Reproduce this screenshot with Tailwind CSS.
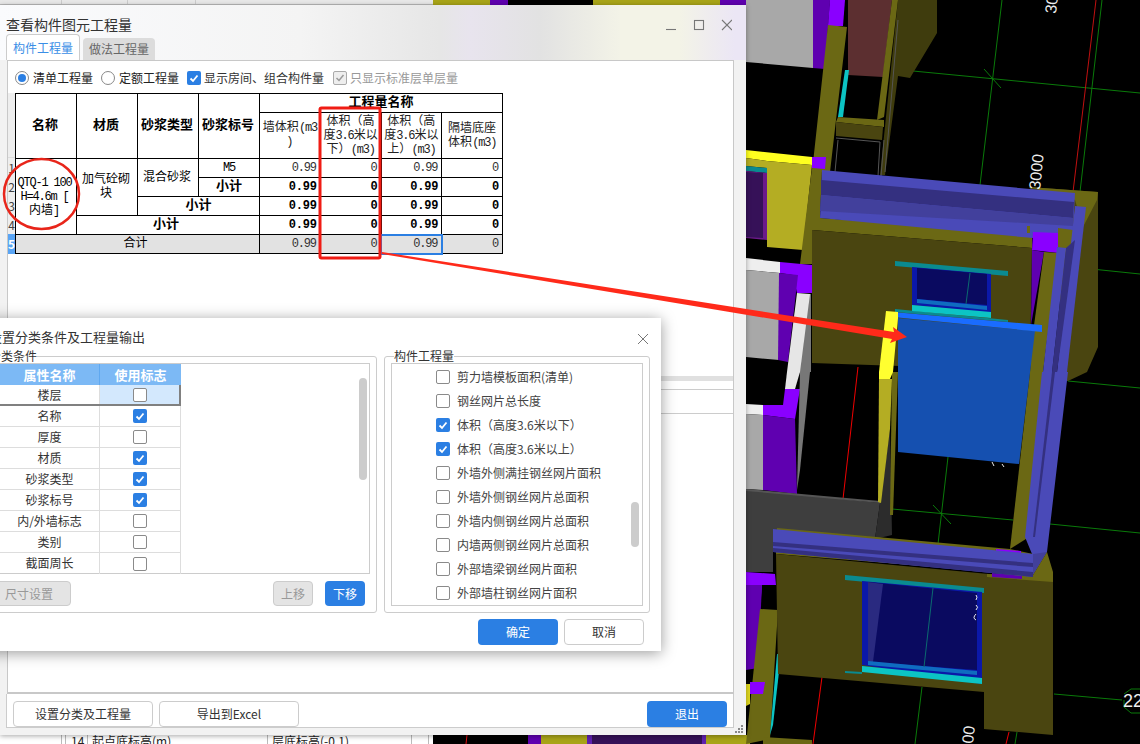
<!DOCTYPE html>
<html lang="zh">
<head>
  <meta charset="UTF-8" />
  <title>查看构件图元工程量</title>
  <script src="https://cdn.jsdelivr.net/npm/@tailwindcss/browser@4"></script>
</head>
<body class="bg-black">
<div class="relative w-[1140px] h-[744px] overflow-hidden bg-black font-['Noto_Sans_CJK_SC','Noto_Sans',sans-serif] text-[12px] text-[#333]">

  <!-- 3D view behind the windows -->
  <svg class="absolute left-0 top-0" width="1140" height="744" viewBox="0 0 1140 744">
    <rect width="1140" height="744" fill="#000"/>
    <!-- strips showing above and below the window -->
    <rect x="433" y="0" width="57" height="6" fill="#a8a418"/>
    <rect x="490" y="0" width="18" height="6" fill="#5f00b0"/>
    <rect x="593" y="0" width="127" height="6" fill="#a8a418"/>
    <rect x="720" y="0" width="30" height="6" fill="#5f00b0"/>
    <rect x="528" y="735" width="13" height="9" fill="#5f00b0"/>
    <rect x="541" y="735" width="46" height="9" fill="#a8a418"/>
    <rect x="587" y="735" width="5" height="9" fill="#5f20b0"/>
    <rect x="592" y="735" width="110" height="9" fill="#361158"/>
    <rect x="702" y="735" width="4" height="9" fill="#5f20b0"/>
    <rect x="706" y="735" width="44" height="9" fill="#a8a418"/>
    <line x1="467" y1="735" x2="466" y2="744" stroke="#e01010"/>

    <!-- grid lines -->
    <g stroke="#0a7a0a" stroke-width="1" fill="none">
      <path d="M913 71L1140 93M1002 0L980 185M1102 0L1080 192M984 69L1001 88M1082 268L1140 274"/>
      <path d="M892 509L1013 520M1050 524L1140 533M948 457L938 544M933 505L951 524M1068 381L1140 388"/>
      <path d="M922 687L915 744M1054 694L1122 700M1017 732L1015 744"/>
      <path d="M1124 694L1131 689L1140 689M1124 700L1124 707L1131 713L1140 713"/>
    </g>
    <g stroke="#c01010" stroke-width="1" fill="none">
      <path d="M1096 0L1073 192"/>
      <path stroke="#f00000" d="M858 367L843 499M822 677L813 744M1009 732L1006 744"/>
    </g>

    <!-- upper tower -->
    <polygon points="746,0 813,0 813,68 746,62" fill="#a8a8a8"/>
    <polygon points="813,0 830,0 825,69 813,68" fill="#5f00b0"/>
    <polygon points="830,0 845,0 843,26 828,26" fill="#8a00ff"/>
    <polygon points="848,0 892,0 883,77 848,75" fill="#5c2f30"/>
    <polygon points="898,0 937,0 937,33 910,78 898,76 885,175 880,175" fill="#3f3c0d"/>
    <polygon points="828,25 847,27 836,120 830,172 812,172" fill="#6b6814"/>
    <polygon points="892,0 898,0 884,117 877,120" fill="#6b6814"/>
    <polygon points="845,70 849,70 843,117 838,117" fill="#0cc4c4"/>
    <polygon points="838,117 884,120 884,127 836,122" fill="#6b6814"/>
    <polygon points="836,122 883,127 882,140 836,136" fill="#4a4510"/>
    <path d="M836 138L880 142L878 176M838 140L835 172M884 140L881 176" stroke="#555" fill="none"/>
    <path d="M898 20L885 172" stroke="#555" fill="none"/>

    <!-- left blocks -->
    <polygon points="746,150 812,157 812,165 767,161 746,158" fill="#ffff20"/>
    <polygon points="767,161 812,165 803,250 767,247" fill="#b4ad23"/>
    <polygon points="746,158 767,161 767,168 746,166" fill="#b4ad23"/>
    <polygon points="746,166 767,168 767,173 746,171" fill="#0a8a90"/>
    <polygon points="746,171 767,173 767,240 746,238" fill="#6b1a8a"/>
    <polygon points="746,172 763,173 763,238 746,237" fill="#361158"/>
    <polygon points="812,157 826,157 825,169 812,168" fill="#8a00ff"/>
    <polygon points="746,258 780,262 780,273 746,270" fill="#eeeeee"/>
    <polygon points="746,270 780,273 779,360 746,357" fill="#a8a8a8"/>
    <polygon points="780,262 812,265 812,293 797,293 793,275 780,273" fill="#8a00ff"/>
    <polygon points="779,273 798,275 788,362 778,360" fill="#5f00b0"/>
    <polygon points="808,294 811,294 811,372 800,372 785,389 795,389" fill="#777"/>
    <polygon points="797,293 810,294 800,372 795,389 785,389 787,372" fill="#e6e6e6"/>
    <polygon points="746,404 763,405 763,415 746,414" fill="#eeeeee"/>
    <polygon points="746,414 763,415 763,490 746,489" fill="#a8a8a8"/>
    <polygon points="763,405 783,405 785,389 800,389 795,419 763,415" fill="#8a00ff"/>
    <polygon points="763,415 795,419 797,494 763,490" fill="#5f00b0"/>
    <polygon points="800,372 810,372 800,470 797,490" fill="#777"/>

    <!-- dark wall -->
    <polygon points="746,489 880,503 875,539 773,532 773,572 746,572" fill="#3e3e3e"/>
    <polygon points="746,489 880,501 880,503 746,491" fill="#555"/>
    <polygon points="880,503 890,429 892,535 875,539" fill="#2c2c2c"/>

    <!-- bottom-left pieces -->
    <polygon points="746,572 775,574 776,585 762,585 760,609 746,610" fill="#8a00ff"/>
    <polygon points="746,585 762,585 758,668 746,670" fill="#5f00b0"/>
    <polygon points="760,609 778,610 770,739 746,744" fill="#6b6814"/>
    <polygon points="746,684 750,684 750,704 746,706" fill="#e0d820"/>
    <polygon points="750,682 765,682 763,694 750,694" fill="#8a00ff"/>
    <polygon points="777,654 781,654 773,725 770,735" fill="#0cc4c4"/>
    <polygon points="763,737 812,740 812,744 763,744" fill="#6b6814"/>

    <!-- upper building -->
    <polygon points="1029,187 1098,192 1098,347 1087,372 1068,381 1060,381 1060,230" fill="#4a4510"/>
    <polygon points="1029,187 1098,192 1097,200 1083,227 1075,200" fill="#6b6814"/>
    <polygon points="812,168 822,170 820,218 1032,233 1032,248 812,230 812,264 800,264" fill="#6b6814"/>
    <polygon points="812,230 1032,248 1030,372 1019,464 1019,370 812,363" fill="#4a4510"/>
    <polygon points="822,170 1075,193 1073,230 1033,238 820,218" fill="#4a4ab8"/>
    <polygon points="821,180 1074,202 1073,218 821,195" fill="#343080"/>
    <polygon points="821,195 1073,218 1073,226 820,211" fill="#42409c"/>
    <polygon points="1027,226 1030,226 1030,233 1027,233" fill="#6b6814"/>
    <polygon points="1058,228 1073,230 1073,250 1058,253" fill="#6b6814"/>
    <polygon points="1033,232 1058,233 1058,253 1032,250" fill="#8a00ff"/>
    <polygon points="1032,250 1044,252 1031,325" fill="#5f00b0"/>
    <polygon points="1044,252 1058,253 1043,372 1030,372 1032,340" fill="#6b6814"/>
    <polygon points="1030,372 1052,372 1037,532 1010,549" fill="#6b6814"/>

    <!-- posts on the right -->
    <polygon points="1075,206 1086,207 1067,372 1057,372" fill="#4a4ab8"/>
    <polygon points="1066,248 1075,240 1057,372 1052,372" fill="#343080"/>
    <polygon points="1057,247 1066,248 1052,372 1043,372" fill="#4a4ab8"/>
    <polygon points="1042,372 1068,372 1047,552 1033,575 1032,554 1025,537" fill="#4a4ab8"/>
    <polygon points="1052,372 1055,372 1035,537 1033,537" fill="#343080"/>
    <polygon points="1047,552 1033,575 1033,554" fill="#42409c"/>

    <!-- upper window -->
    <polygon points="895,261 1008,271 1008,276 895,266" fill="#0a8a90"/>
    <polygon points="912,267 991,274 991,313 912,305" fill="#0b18a8"/>
    <polygon points="917,268 987,274 987,305 917,299" fill="#0a0a60"/>
    <polygon points="917,299 987,306 987,310 917,303" fill="#0f6cc0"/>
    <line x1="970" y1="273" x2="966" y2="304" stroke="#0a6a70"/>
    <polygon points="895,309 1008,320 1008,322 895,312" fill="#0a8a90"/>
    <polygon points="912,305 991,312 991,318 912,311" fill="#0cc4c4"/>

    <!-- blue panel and yellow post -->
    <polygon points="898,318 1035,331 1019,464 898,452" fill="#1550b0"/>
    <polygon points="893,312 1042,325 1042,332 893,317" fill="#1a6cff"/>
    <polygon points="892,372 898,372 893,515 890,515" fill="#6b6814"/>
    <polygon points="886,311 898,312 898,318 893,372 890,379 879,379 879,372" fill="#ffff30"/>
    <polygon points="879,379 892,379 890,429 881,503 878,502" fill="#b4ad23"/>
    <path d="M992 462L994 466M1002 464L1004 467" stroke="#eee"/>

    <!-- lower building -->
    <polygon points="777,528 1010,549 1033,554 1033,575 776,554" fill="#6b6814"/>
    <polygon points="776,554 1053,580 1053,735 984,729 984,692 778,674" fill="#4a4510"/>
    <polygon points="1047,552 1053,572 1053,582 987,577 987,574 1033,575" fill="#6b6814"/>
    <polygon points="992,573 1022,576 1022,579 992,577" fill="#5f00b0"/>
    <polygon points="996,549 1021,551 1021,553 996,552" fill="#8a00ff"/>
    <polygon points="773,529 1033,554 1033,577 773,552" fill="#4a4ab8"/>
    <polygon points="773,542 1033,563 1033,567 773,546" fill="#343080"/>
    <polygon points="773,548 1033,572 1033,577 773,552" fill="#343080"/>
    <polygon points="845,575 984,588 984,593 845,580" fill="#0a8a90"/>
    <polygon points="862,581 982,592 982,684 862,665" fill="#0b18a8"/>
    <polygon points="868,582 977,593 977,670 868,662" fill="#0a0a60"/>
    <polygon points="868,582 883,584 873,662 868,662" fill="#2a2a80"/>
    <polygon points="868,661 977,671 977,675 868,665" fill="#0f6cc0"/>
    <polygon points="862,666 982,678 982,684 862,672" fill="#0cc4c4"/>
    <polygon points="845,671 862,672 862,674 845,673" fill="#0a8a90"/>
    <line x1="933" y1="588" x2="924" y2="667" stroke="#0a6a70"/>
    <path d="M976 595Q978 597 976 600M976 605Q979 607 976 610M976 614Q972 618 976 620" stroke="#eee" fill="none"/>

    <!-- dimension labels -->
    <text transform="translate(1056,14) rotate(-84)" fill="#eee" font-family="Liberation Sans" font-size="16">30</text>
    <text transform="translate(1040,190) rotate(-84)" fill="#eee" font-family="Liberation Sans" font-size="16">3000</text>
    <text transform="translate(973,744) rotate(-84)" fill="#eee" font-family="Liberation Sans" font-size="16">00</text>
    <text x="1123" y="707" fill="#eee" font-family="Liberation Sans" font-size="18">22</text>
  </svg>

  <!-- main application pane behind the window -->
  <div class="absolute left-0 top-0 w-[433px] h-[744px] bg-white">
    <div class="flex h-[5px] border-b border-[#bbb] bg-[#e8e8e8]">
      <div class="w-[62px] border-r border-[#ccc]"></div>
      <div class="w-[66px] border-r border-[#ccc]"></div>
      <div class="w-[68px] border-r border-[#ccc]"></div>
    </div>
  </div>
  <div class="absolute left-0 top-[735px] flex h-[9px] w-[433px] overflow-hidden bg-white leading-[12px] text-[#222]">
    <div class="w-[62px] border-r border-[#bbb]"></div>
    <div class="w-[4px] border-r border-[#bbb]"></div>
    <div class="w-[22px] border-r border-[#bbb] pl-[5px]">14</div>
    <div class="w-[180px] border-r border-[#bbb] pl-[4px]">起点底标高(m)</div>
    <div class="w-[144px] border-r border-[#bbb] pl-[4px]">层底标高(-0.1)</div>
    <div class="w-[17px] border-r border-[#bbb]"></div>
  </div>

  <!-- 查看构件图元工程量 window -->
  <div class="absolute left-0 top-[5px] flex h-[730px] w-[746px] flex-col bg-[#f2f2f2] shadow-[0_1px_5px_rgba(0,0,0,0.35)]">
    <div class="h-[55px] bg-[linear-gradient(90deg,#fafbfd_0px,#f4f4f4_300px,#e6e6e6_440px,#e8e4ee_470px,#e2e2e2_540px,#f3f3e7_620px,#f3f3e7_680px,#ebe6f5_735px)]">
      <div class="flex h-[29px] items-center pl-[6px] pt-[10px]">
        <span class="flex-1 text-[14px] text-[#333]">查看构件图元工程量</span>
        <svg class="mr-[14px]" width="66" height="12" viewBox="0 0 66 12" fill="none" stroke="#777" stroke-width="1.1">
          <path d="M0 10.5H10"/>
          <rect x="28.5" y="1.5" width="9" height="9"/>
          <path d="M56 1L66 11M66 1L56 11"/>
        </svg>
      </div>
      <div class="flex h-[26px] items-end pl-[6px]">
        <div class="flex h-[26px] w-[74px] items-center justify-center rounded-t-[4px] border border-b-0 border-[#ccc] bg-white text-[#3a8ee6]">构件工程量</div>
        <div class="ml-[3px] flex h-[22px] w-[72px] items-center justify-center rounded-t-[4px] bg-[#dcdcdc] text-[#666]">做法工程量</div>
      </div>
    </div>

    <!-- white panel -->
    <div class="ml-[7px] flex h-[634px] w-[727px] flex-col border-x border-t border-b-2 border-[#c8c8c8] bg-white">
      <div class="h-[315px]">
        <div class="flex h-[32px] items-center pl-[7px] pt-[1px]">
          <div class="flex h-[14px] w-[14px] items-center justify-center rounded-full border border-[#888]"><div class="h-[8px] w-[8px] rounded-full bg-[#2b7fe3]"></div></div>
          <span class="ml-[4px] w-[68px] text-[#222]">清单工程量</span>
          <div class="h-[14px] w-[14px] rounded-full border border-[#888]"></div>
          <span class="ml-[4px] w-[68px] text-[#222]">定额工程量</span>
          <div class="flex h-[14px] w-[14px] items-center justify-center rounded-[2px] bg-[#2b7fe3]">
            <svg width="12" height="12" viewBox="0 0 12 12"><path d="M2.5 6.5L5 9L9.5 3.5" stroke="#fff" stroke-width="1.8" fill="none"/></svg>
          </div>
          <span class="ml-[3px] w-[129px] text-[#333]">显示房间、组合构件量</span>
          <div class="flex h-[14px] w-[14px] items-center justify-center rounded-[2px] border border-[#aaa] bg-[#eee]">
            <svg width="12" height="12" viewBox="0 0 12 12"><path d="M2.5 6L5 8.5L9.5 3" stroke="#999" stroke-width="1.5" fill="none"/></svg>
          </div>
          <span class="ml-[3px] text-[#999]">只显示标准层单层量</span>
        </div>

        <div class="flex">
          <!-- row numbers -->
          <div class="w-[7px] bg-[#eeeeee] text-center leading-[19px] text-[#444]">
            <div class="h-[65px] border-b border-[#ddd]"></div>
            <div class="h-[19px]">1</div>
            <div class="h-[19px]">2</div>
            <div class="h-[19px]">3</div>
            <div class="h-[19px]">4</div>
            <div class="h-[20px] bg-[#5aa5f5] font-bold text-white">5</div>
          </div>
          <table class="w-[488px] table-fixed border-collapse whitespace-nowrap text-center font-['Liberation_Mono','Noto_Sans_CJK_SC',monospace] text-[12px] leading-[14px] text-black [&_td]:border [&_td]:border-black [&_th]:border [&_th]:border-black">
            <tbody>
              <tr class="h-[19px]">
                <th rowspan="2" class="w-[61px] pr-[2px] text-[13px] font-bold">名称</th>
                <th rowspan="2" class="w-[61px] pr-[2px] text-[13px] font-bold">材质</th>
                <th rowspan="2" class="w-[61px] pr-[2px] text-[13px] font-bold">砂浆类型</th>
                <th rowspan="2" class="w-[61px] pr-[2px] text-[13px] font-bold">砂浆标号</th>
                <th colspan="4" class="text-[13px] font-bold">工程量名称</th>
              </tr>
              <tr class="h-[46px] text-[#222]">
                <td class="pb-[2px]">墙体积<span class="tracking-[-1.2px]">(m3</span><br />)</td>
                <td>体积（高<br />度<span class="tracking-[-1.2px]">3.6</span>米以<br />下）<span class="tracking-[-1.2px]">(m3)</span></td>
                <td>体积（高<br />度<span class="tracking-[-1.2px]">3.6</span>米以<br />上）<span class="tracking-[-1.2px]">(m3)</span></td>
                <td>隔墙底座<br />体积<span class="tracking-[-1.2px]">(m3)</span></td>
              </tr>
              <tr class="h-[19px]">
                <td rowspan="4" class="pr-[3px]"><span class="tracking-[-1.2px]">QTQ-1 100<br />H=4.6m [</span><br />内墙]</td>
                <td rowspan="3" class="pr-[2px]">加气砼砌<br />块</td>
                <td rowspan="2" class="pr-[2px]">混合砂浆</td>
                <td class="tracking-[-1.2px]">M5</td>
                <td class="pr-[4px] text-right tracking-[-1.2px] text-[#333]">0.99</td>
                <td class="pr-[4px] text-right tracking-[-1.2px] text-[#333]">0</td>
                <td class="pr-[4px] text-right tracking-[-1.2px] text-[#333]">0.99</td>
                <td class="pr-[4px] text-right tracking-[-1.2px] text-[#333]">0</td>
              </tr>
              <tr class="h-[19px]">
                <td class="text-[13px] font-bold">小计</td>
                <td class="pr-[3px] text-right font-bold tracking-[-0.2px]">0.99</td>
                <td class="pr-[3px] text-right font-bold tracking-[-0.2px]">0</td>
                <td class="pr-[3px] text-right font-bold tracking-[-0.2px]">0.99</td>
                <td class="pr-[3px] text-right font-bold tracking-[-0.2px]">0</td>
              </tr>
              <tr class="h-[19px]">
                <td colspan="2" class="text-[13px] font-bold">小计</td>
                <td class="pr-[3px] text-right font-bold tracking-[-0.2px]">0.99</td>
                <td class="pr-[3px] text-right font-bold tracking-[-0.2px]">0</td>
                <td class="pr-[3px] text-right font-bold tracking-[-0.2px]">0.99</td>
                <td class="pr-[3px] text-right font-bold tracking-[-0.2px]">0</td>
              </tr>
              <tr class="h-[19px]">
                <td colspan="3" class="pr-[4px] text-[13px] font-bold">小计</td>
                <td class="pr-[3px] text-right font-bold tracking-[-0.2px]">0.99</td>
                <td class="pr-[3px] text-right font-bold tracking-[-0.2px]">0</td>
                <td class="pr-[3px] text-right font-bold tracking-[-0.2px]">0.99</td>
                <td class="pr-[3px] text-right font-bold tracking-[-0.2px]">0</td>
              </tr>
              <tr class="h-[19px] bg-[#e2e2e2]">
                <td colspan="4" class="pr-[4px]">合计</td>
                <td class="pr-[4px] text-right tracking-[-1.2px] text-[#333]">0.99</td>
                <td class="pr-[4px] text-right tracking-[-1.2px] text-[#333]">0</td>
                <td class="pr-[4px] text-right tracking-[-1.2px] text-[#333] outline-2 outline-[#2b7fe3] -outline-offset-1">0.99</td>
                <td class="pr-[4px] text-right tracking-[-1.2px] text-[#333]">0</td>
              </tr>
            </tbody>
          </table>
        </div>
      </div>
      <div class="h-[5px] bg-[#e0e0e0]"></div>
      <div class="h-[9px] border-b border-[#ccc]"></div>
      <div class="h-[24px] border-b border-[#ccc]"></div>
    </div>

    <!-- footer buttons -->
    <div class="ml-[6px] flex h-[34px] w-[728px] items-end border-x border-b border-[#ccc] bg-white">
      <button class="ml-[6px] h-[26px] w-[140px] rounded-[4px] border border-[#ccc] bg-white text-[#333]">设置分类及工程量</button>
      <button class="ml-[6px] h-[26px] w-[140px] rounded-[4px] border border-[#ccc] bg-white text-[#333]">导出到Excel</button>
      <button class="ml-auto mr-[6px] h-[26px] w-[80px] rounded-[4px] bg-[#2b7fe3] text-white">退出</button>
    </div>
    <svg class="absolute bottom-[2px] right-[3px]" width="8" height="8" viewBox="0 0 8 8" fill="#888">
      <rect x="6" y="0" width="2" height="2"/><rect x="3" y="3" width="2" height="2"/><rect x="6" y="3" width="2" height="2"/>
      <rect x="0" y="6" width="2" height="2"/><rect x="3" y="6" width="2" height="2"/><rect x="6" y="6" width="2" height="2"/>
    </svg>
  </div>

  <!-- red annotations -->
  <svg class="absolute left-0 top-0" width="1140" height="744" viewBox="0 0 1140 744" fill="none">
    <ellipse cx="41.5" cy="194" rx="37.5" ry="35" stroke="#e8251a" stroke-width="2.5"/>
    <rect x="320" y="108" width="60" height="150" rx="1.5" stroke="#f01c14" stroke-width="3"/>
    <polygon points="382,252 382,254 892,339 890,343 907,337 893,327 894,332" fill="#ff2a1a"/>
  </svg>

  <!-- 设置分类条件及工程量输出 dialog -->
  <div class="absolute left-[-22px] top-[318px] h-[333px] w-[683px] bg-white shadow-[0_2px_14px_rgba(0,0,0,0.4)]">
    <div class="flex h-[30px] items-end justify-between pl-[11px] pr-[12px]">
      <span class="text-[13px] leading-[22px] text-[#333]">设置分类条件及工程量输出</span>
      <svg class="mb-[3px]" width="12" height="12" viewBox="0 0 12 12" stroke="#777" fill="none"><path d="M1 1L11 11M11 1L1 11"/></svg>
    </div>

    <div class="mt-[8px] flex pl-[4px]">
      <!-- 分类条件 -->
      <div class="relative h-[257px] w-[395px] rounded-[3px] border border-[#ccc]">
        <span class="absolute left-[6px] top-[-10px] bg-white leading-[17px] text-[#333]">分类条件</span>
        <div class="relative ml-[6px] mt-[6px] h-[211px] w-[381px] border border-[#ccc]">
          <div class="flex h-[21px] w-[191px] bg-[#7cb9f5] text-[13px] font-bold leading-[21px] text-white">
            <div class="w-[110px] border-r border-[#5fa8f0] pl-[10px] text-center">属性名称</div>
            <div class="flex-1 text-center">使用标志</div>
          </div>
          <div class="flex h-[21px] w-[191px] border-b-2 border-r-2 border-[#808080] leading-[20px]">
            <div class="w-[110px] border-r border-[#ddd] pl-[10px] text-center">楼层</div>
            <div class="flex flex-1 items-center justify-center bg-[#d3e8fd]"><div class="h-[14px] w-[14px] rounded-[2px] border border-[#8a8a8a] bg-white"></div></div>
          </div>
          <div class="flex h-[21px] w-[191px] border-b border-r border-[#ddd] leading-[20px]">
            <div class="w-[110px] border-r border-[#ddd] pl-[10px] text-center">名称</div>
            <div class="flex flex-1 items-center justify-center"><div class="flex h-[14px] w-[14px] items-center justify-center rounded-[2px] bg-[#2b7fe3]"><svg width="12" height="12" viewBox="0 0 12 12"><path d="M2.5 6.5L5 9L9.5 3.5" stroke="#fff" stroke-width="1.8" fill="none"/></svg></div></div>
          </div>
          <div class="flex h-[21px] w-[191px] border-b border-r border-[#ddd] leading-[20px]">
            <div class="w-[110px] border-r border-[#ddd] pl-[10px] text-center">厚度</div>
            <div class="flex flex-1 items-center justify-center"><div class="h-[14px] w-[14px] rounded-[2px] border border-[#8a8a8a] bg-white"></div></div>
          </div>
          <div class="flex h-[21px] w-[191px] border-b border-r border-[#ddd] leading-[20px]">
            <div class="w-[110px] border-r border-[#ddd] pl-[10px] text-center">材质</div>
            <div class="flex flex-1 items-center justify-center"><div class="flex h-[14px] w-[14px] items-center justify-center rounded-[2px] bg-[#2b7fe3]"><svg width="12" height="12" viewBox="0 0 12 12"><path d="M2.5 6.5L5 9L9.5 3.5" stroke="#fff" stroke-width="1.8" fill="none"/></svg></div></div>
          </div>
          <div class="flex h-[21px] w-[191px] border-b border-r border-[#ddd] leading-[20px]">
            <div class="w-[110px] border-r border-[#ddd] pl-[10px] text-center">砂浆类型</div>
            <div class="flex flex-1 items-center justify-center"><div class="flex h-[14px] w-[14px] items-center justify-center rounded-[2px] bg-[#2b7fe3]"><svg width="12" height="12" viewBox="0 0 12 12"><path d="M2.5 6.5L5 9L9.5 3.5" stroke="#fff" stroke-width="1.8" fill="none"/></svg></div></div>
          </div>
          <div class="flex h-[21px] w-[191px] border-b border-r border-[#ddd] leading-[20px]">
            <div class="w-[110px] border-r border-[#ddd] pl-[10px] text-center">砂浆标号</div>
            <div class="flex flex-1 items-center justify-center"><div class="flex h-[14px] w-[14px] items-center justify-center rounded-[2px] bg-[#2b7fe3]"><svg width="12" height="12" viewBox="0 0 12 12"><path d="M2.5 6.5L5 9L9.5 3.5" stroke="#fff" stroke-width="1.8" fill="none"/></svg></div></div>
          </div>
          <div class="flex h-[21px] w-[191px] border-b border-r border-[#ddd] leading-[20px]">
            <div class="w-[110px] border-r border-[#ddd] pl-[10px] text-center">内/外墙标志</div>
            <div class="flex flex-1 items-center justify-center"><div class="h-[14px] w-[14px] rounded-[2px] border border-[#8a8a8a] bg-white"></div></div>
          </div>
          <div class="flex h-[21px] w-[191px] border-b border-r border-[#ddd] leading-[20px]">
            <div class="w-[110px] border-r border-[#ddd] pl-[10px] text-center">类别</div>
            <div class="flex flex-1 items-center justify-center"><div class="h-[14px] w-[14px] rounded-[2px] border border-[#8a8a8a] bg-white"></div></div>
          </div>
          <div class="flex h-[21px] w-[191px] border-r border-[#ddd] leading-[20px]">
            <div class="w-[110px] border-r border-[#ddd] pl-[10px] text-center">截面周长</div>
            <div class="flex flex-1 items-center justify-center"><div class="h-[14px] w-[14px] rounded-[2px] border border-[#8a8a8a] bg-white"></div></div>
          </div>
          <div class="absolute right-[2px] top-[14px] h-[102px] w-[8px] rounded-[4px] bg-[#ccc]"></div>
        </div>
        <div class="ml-[4px] mt-[7px] flex items-center">
          <button class="h-[25px] w-[84px] rounded-[4px] border border-[#ccc] bg-[#e4e4e4] text-[#999]">尺寸设置</button>
          <button class="ml-[202px] h-[25px] w-[40px] rounded-[4px] border border-[#ccc] bg-[#e4e4e4] text-[#999]">上移</button>
          <button class="ml-[12px] h-[25px] w-[40px] rounded-[4px] bg-[#2b7fe3] text-white">下移</button>
        </div>
      </div>

      <!-- 构件工程量 -->
      <div class="relative ml-[7px] h-[257px] w-[266px] rounded-[3px] border border-[#ccc]">
        <span class="absolute left-[9px] top-[-10px] bg-white leading-[17px] text-[#333]">构件工程量</span>
        <div class="relative ml-[6px] mt-[6px] h-[243px] w-[252px] overflow-hidden border border-[#ccc] pl-[44px] pt-[1px] text-[#444]">
          <div class="flex h-[24px] items-center"><div class="h-[14px] w-[14px] rounded-[2px] border border-[#8a8a8a]"></div><span class="ml-[7px]">剪力墙模板面积(清单)</span></div>
          <div class="flex h-[24px] items-center"><div class="h-[14px] w-[14px] rounded-[2px] border border-[#8a8a8a]"></div><span class="ml-[7px]">钢丝网片总长度</span></div>
          <div class="flex h-[24px] items-center"><div class="flex h-[14px] w-[14px] items-center justify-center rounded-[2px] bg-[#2b7fe3]"><svg width="12" height="12" viewBox="0 0 12 12"><path d="M2.5 6.5L5 9L9.5 3.5" stroke="#fff" stroke-width="1.8" fill="none"/></svg></div><span class="ml-[7px]">体积（高度3.6米以下）</span></div>
          <div class="flex h-[24px] items-center"><div class="flex h-[14px] w-[14px] items-center justify-center rounded-[2px] bg-[#2b7fe3]"><svg width="12" height="12" viewBox="0 0 12 12"><path d="M2.5 6.5L5 9L9.5 3.5" stroke="#fff" stroke-width="1.8" fill="none"/></svg></div><span class="ml-[7px]">体积（高度3.6米以上）</span></div>
          <div class="flex h-[24px] items-center"><div class="h-[14px] w-[14px] rounded-[2px] border border-[#8a8a8a]"></div><span class="ml-[7px]">外墙外侧满挂钢丝网片面积</span></div>
          <div class="flex h-[24px] items-center"><div class="h-[14px] w-[14px] rounded-[2px] border border-[#8a8a8a]"></div><span class="ml-[7px]">外墙外侧钢丝网片总面积</span></div>
          <div class="flex h-[24px] items-center"><div class="h-[14px] w-[14px] rounded-[2px] border border-[#8a8a8a]"></div><span class="ml-[7px]">外墙内侧钢丝网片总面积</span></div>
          <div class="flex h-[24px] items-center"><div class="h-[14px] w-[14px] rounded-[2px] border border-[#8a8a8a]"></div><span class="ml-[7px]">内墙两侧钢丝网片总面积</span></div>
          <div class="flex h-[24px] items-center"><div class="h-[14px] w-[14px] rounded-[2px] border border-[#8a8a8a]"></div><span class="ml-[7px]">外部墙梁钢丝网片面积</span></div>
          <div class="flex h-[24px] items-center"><div class="h-[14px] w-[14px] rounded-[2px] border border-[#8a8a8a]"></div><span class="ml-[7px]">外部墙柱钢丝网片面积</span></div>
          <div class="absolute right-[3px] top-[138px] h-[45px] w-[8px] rounded-[4px] bg-[#ccc]"></div>
        </div>
      </div>
    </div>

    <div class="mt-[6px] flex justify-end pr-[17px]">
      <button class="h-[26px] w-[80px] rounded-[4px] bg-[#2b7fe3] text-white">确定</button>
      <button class="ml-[6px] h-[26px] w-[80px] rounded-[4px] border border-[#ccc] bg-white text-[#333]">取消</button>
    </div>
  </div>
</div>
</body>
</html>
